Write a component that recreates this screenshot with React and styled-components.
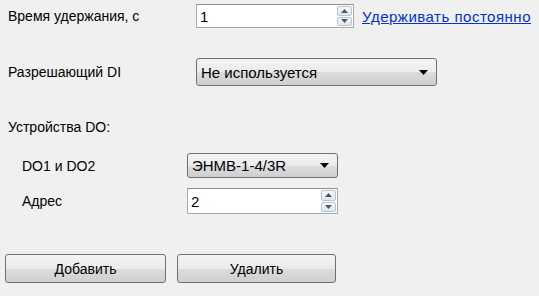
import React from 'react';
import styled, { createGlobalStyle } from 'styled-components';

const GlobalStyle = createGlobalStyle`
    html, body {
        margin: 0;
        padding: 0;
        background: #f0f0f0;
    }
    body {
        font-family: 'Liberation Sans', Arial, sans-serif;
        font-size: 14px;
        color: #000000;
    }
`;

function SpinBox({ value, width, height }) {
    return (
        <SpinFrame width={width} height={height}>
            <SpinValue>{value}</SpinValue>
            <SpinButtons>
                <SpinButton>
                    <svg width="7" height="4" viewBox="0 0 7 4"><polygon points="0,4 3.5,0 7,4" fill="#4a5a6e" /></svg>
                </SpinButton>
                <SpinButton>
                    <svg width="7" height="4" viewBox="0 0 7 4"><polygon points="0,0 3.5,4 7,0" fill="#4a5a6e" /></svg>
                </SpinButton>
            </SpinButtons>
        </SpinFrame>
    );
}

function Combo({ value, width, height }) {
    return (
        <ComboFrame width={width} height={height}>
            <ComboValue>{value}</ComboValue>
            <svg width="9" height="5" viewBox="0 0 9 5"><polygon points="0,0 9,0 4.5,5" fill="#000" /></svg>
        </ComboFrame>
    );
}

export default function App() {
    return (
        <Page>
            <GlobalStyle />
            <Row top={4}>
                <Label width={188}>Время удержания, с</Label>
                <SpinBox value="1" width={161} height={24} />
                <LinkText>Удерживать постоянно</LinkText>
            </Row>
            <Row top={30}>
                <Label width={188}>Разрешающий DI</Label>
                <Combo value="Не используется" width={241} height={28} />
            </Row>
            <Section>Устройства DO:</Section>
            <SubRow top={18}>
                <Label width={165}>DO1 и DO2</Label>
                <Combo value="ЭНМВ-1-4/3R" width={151} height={25} />
            </SubRow>
            <SubRow top={10}>
                <Label width={165}>Адрес</Label>
                <SpinBox value="2" width={151} height={26} />
            </SubRow>
            <ButtonBar>
                <PushButton width={161}>Добавить</PushButton>
                <PushButton width={159}>Удалить</PushButton>
            </ButtonBar>
        </Page>
    );
}

const Page = styled.div`
    display: flex;
    flex-direction: column;
    width: 539px;
    height: 296px;
    padding: 0 8px;
    box-sizing: border-box;
    background: #f0f0f0;
`;

const Row = styled.div`
    display: flex;
    align-items: center;
    margin-top: ${p => p.top}px;
`;

const SubRow = styled(Row)`
    padding-left: 14px;
`;

const Label = styled.div`
    width: ${p => p.width}px;
    flex-shrink: 0;
    font-size: 14px;
    color: #000;
    white-space: nowrap;
`;

const Section = styled.div`
    margin-top: 33px;
    font-size: 14px;
    line-height: 16px;
`;

const SpinFrame = styled.div`
    display: flex;
    align-items: stretch;
    width: ${p => p.width}px;
    height: ${p => p.height}px;
    box-sizing: border-box;
    border: 1px solid #a9a9a9;
    border-top-color: #8f8f8f;
    background: #ffffff;
    padding: 1px;
`;

const SpinValue = styled.div`
    flex: 1;
    display: flex;
    align-items: center;
    padding-left: 2px;
    font-size: 15px;
`;

const SpinButtons = styled.div`
    display: flex;
    flex-direction: column;
    width: 15px;
    gap: 1px;
`;

const SpinButton = styled.div`
    flex: 1;
    display: flex;
    align-items: center;
    justify-content: center;
    border: 1px solid #b8c4d2;
    border-radius: 2px;
    background: linear-gradient(#f6f8fb, #dfe6ee);
`;

const LinkText = styled.a`
    margin-left: 8px;
    color: #0033cc;
    text-decoration: underline;
    font-size: 15px;
    letter-spacing: 0.5px;
    cursor: pointer;
    white-space: nowrap;
`;

const ComboFrame = styled.div`
    display: flex;
    align-items: center;
    justify-content: space-between;
    width: ${p => p.width}px;
    height: ${p => p.height}px;
    box-sizing: border-box;
    padding: 0 8px 0 4px;
    border: 1px solid #707070;
    border-radius: 3px;
    background: linear-gradient(#f3f3f3 0%, #ebebeb 50%, #dddddd 51%, #cfcfcf 100%);
`;

const ComboValue = styled.div`
    font-size: 15px;
    white-space: nowrap;
`;

const ButtonBar = styled.div`
    display: flex;
    gap: 11px;
    margin-top: 40px;
    margin-left: -3px;
`;

const PushButton = styled.button`
    width: ${p => p.width}px;
    height: 29px;
    border: 1px solid #707070;
    border-radius: 3px;
    background: linear-gradient(#f3f3f3 0%, #ebebeb 50%, #dddddd 51%, #cfcfcf 100%);
    font-family: 'Liberation Sans', Arial, sans-serif;
    font-size: 14px;
    color: #000;
    padding: 0;
`;
